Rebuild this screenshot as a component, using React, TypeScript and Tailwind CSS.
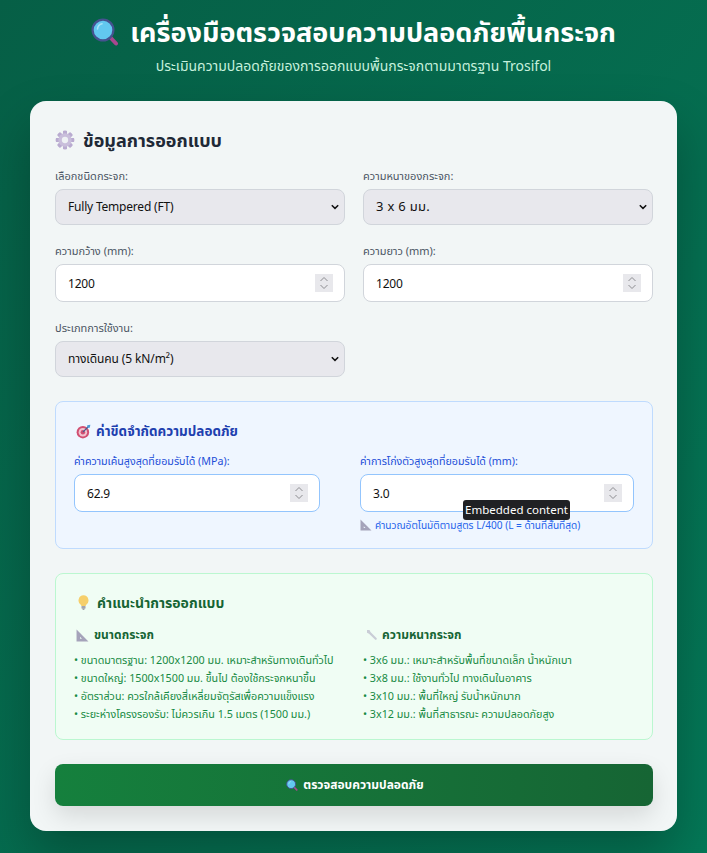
import React from "react";

const FONT = "font-['Noto_Sans','Noto_Sans_Thai','Noto_Sans_Thai_UI','Lato',sans-serif]";

function Magnifier({ className }: { className: string }) {
  return (
    <svg viewBox="0 0 28 28" className={className}>
      <path d="M18 18 L25 25.5" stroke="#a8478f" strokeWidth="4" strokeLinecap="round" />
      <circle cx="12" cy="12" r="10.4" fill="#62c8f0" stroke="#45528f" strokeWidth="2.2" />
      <path d="M6.5 11 A6 6 0 0 1 11 5.8" stroke="#a8e4f8" strokeWidth="1.6" fill="none" strokeLinecap="round" />
    </svg>
  );
}

function Gear({ className }: { className: string }) {
  const teeth = [0, 45, 90, 135, 180, 225, 270, 315];
  return (
    <svg viewBox="0 0 24 24" className={className}>
      {teeth.map((a) => (
        <rect key={a} x="9.6" y="1" width="4.8" height="22" rx="1.2" fill="#b9abd0" transform={`rotate(${a} 12 12)`} />
      ))}
      <circle cx="12" cy="12" r="8" fill="#c9bedb" />
      <circle cx="12" cy="12" r="3.8" fill="#eef1f4" />
    </svg>
  );
}

function Target({ className }: { className: string }) {
  return (
    <svg viewBox="0 0 24 24" className={className}>
      <circle cx="11" cy="13" r="10" fill="#d14f72" />
      <circle cx="11" cy="13" r="6.8" fill="#f0c3cf" />
      <circle cx="11" cy="13" r="3.6" fill="#d14f72" />
      <path d="M11 13 L20 4" stroke="#3f5f8f" strokeWidth="1.8" />
      <path d="M18 2 L23 1 L22 6 L19 6 L18 5 Z" fill="#4a9ad8" />
    </svg>
  );
}

function Ruler({ className }: { className: string }) {
  return (
    <svg viewBox="0 0 24 24" className={className}>
      <path fillRule="evenodd" d="M1 1 L23 23 L1 23 Z M7.5 14.5 L7.5 18 L11 18 Z" fill="#a5a3ba" />
    </svg>
  );
}

function Bulb({ className }: { className: string }) {
  return (
    <svg viewBox="0 0 16 22" className={className}>
      <path d="M8 0.5 A7.5 7.5 0 0 0 4 14.2 L5 16 L11 16 L12 14.2 A7.5 7.5 0 0 0 8 0.5 Z" fill="#f6cf6b" />
      <rect x="5" y="16" width="6" height="4" rx="1" fill="#a3a5b0" />
      <rect x="6.5" y="20" width="3" height="1.5" rx=".7" fill="#85878f" />
    </svg>
  );
}

function Wrench({ className }: { className: string }) {
  return (
    <svg viewBox="0 0 24 24" className={className}>
      <path d="M2 2 L7 2 L9 6 L21 18 A2 2 0 0 1 18 21 L6 9.5 L2 7.5 Z" fill="#c9cdd6" />
    </svg>
  );
}

function Chevron() {
  return (
    <svg viewBox="0 0 8 6" className="pointer-events-none absolute right-[6px] top-1/2 h-[6px] w-[8px] -translate-y-1/2">
      <path d="M0.8 1.2 L4 4.4 L7.2 1.2" fill="none" stroke="#111" strokeWidth="1.5" />
    </svg>
  );
}

function Spinner() {
  return (
    <div className="pointer-events-none absolute right-[12px] top-1/2 flex h-[18px] w-[18px] -translate-y-1/2 items-center justify-center bg-[#e8e8ec]">
      <svg viewBox="0 0 18 18" className="h-[18px] w-[18px]">
        <path d="M5.5 7 L9 3.5 L12.5 7 M5.5 11 L9 14.5 L12.5 11" fill="none" stroke="#8c8c90" strokeWidth="1" />
      </svg>
    </div>
  );
}

function SelectField({ label, value, options, textClass }: { label: string; value: string; options: string[]; textClass: string }) {
  return (
    <div className="flex flex-col">
      <label className="mb-[4px] h-[19px] text-[11px] leading-[19px] text-[#4b5563]">{label}</label>
      <div className="relative h-[36px]">
        <select
          defaultValue={value}
          className={`h-full w-full appearance-none rounded-[8px] border border-[#d1d5db] bg-[#e8e8ed] px-3 text-[#111] outline-none ${textClass}`}
        >
          {options.map((o) => (
            <option key={o}>{o}</option>
          ))}
        </select>
        <Chevron />
      </div>
    </div>
  );
}

function NumberField({ label, value }: { label: string; value: string }) {
  return (
    <div className="flex flex-col">
      <label className="mb-[4px] h-[19px] text-[11px] leading-[19px] text-[#4b5563]">{label}</label>
      <div className="relative h-[38px]">
        <input
          readOnly
          value={value}
          className="h-full w-full rounded-[8px] border border-[#d1d5db] bg-white px-3 text-[12px] tracking-[-0.2px] text-[#111] outline-none"
        />
        <Spinner />
      </div>
    </div>
  );
}

function LimitField({ label, value, note }: { label: string; value: string; note?: boolean }) {
  return (
    <div className="flex flex-col">
      <label className="mb-[3px] h-[19px] whitespace-nowrap text-[10.7px] leading-[19px] text-[#1d4ed8]">{label}</label>
      <div className="relative h-[38px]">
        <input
          readOnly
          value={value}
          className="h-full w-full rounded-[8px] border border-[#93c5fd] bg-white px-3 text-[12px] tracking-[-0.2px] text-[#111] outline-none"
        />
        <Spinner />
        {note && (
          <div className="absolute left-[103px] top-[26px] z-10 flex h-[20px] w-[107px] items-center justify-center whitespace-nowrap rounded-[3px] bg-[#202124] text-[11.5px] text-white">
            Embedded content
          </div>
        )}
      </div>
      {note && (
        <div className="mt-[5px] flex items-center gap-[3px] text-[10.1px] leading-[16px] text-[#2563eb]">
          <Ruler className="h-[12px] w-[12px]" />
          <span>คำนวณอัตโนมัติตามสูตร L/400 (L = ด้านที่สั้นที่สุด)</span>
        </div>
      )}
    </div>
  );
}

function TipColumn({ icon, title, items }: { icon: React.ReactNode; title: string; items: string[] }) {
  return (
    <div className="flex flex-col">
      <div className="mb-[6px] flex h-[20px] items-center text-[12px] font-bold text-[#166534]">
        {icon}
        <span>{title}</span>
      </div>
      <ul className="flex flex-col text-[10.75px] leading-[18px] text-[#178a43]">
        {items.map((t) => (
          <li key={t} className="whitespace-nowrap">• {t}</li>
        ))}
      </ul>
    </div>
  );
}

export default function App() {
  return (
    <div className={`${FONT} h-[853px] w-[707px] overflow-hidden bg-gradient-to-br from-[#065f46] to-[#047857]`}>
      <header className="flex h-[101px] flex-col items-center pt-[12px] text-white">
        <h1 className="flex h-[40px] items-center gap-[11px] text-[27px] font-bold leading-[40px]">
          <Magnifier className="h-[28px] w-[28px]" />
          <span>เครื่องมือตรวจสอบความปลอดภัยพื้นกระจก</span>
        </h1>
        <p className="mt-[4px] text-[14px] leading-[20px] text-[#c6f1dd]">
          ประเมินความปลอดภัยของการออกแบบพื้นกระจกตามมาตรฐาน Trosifol
        </p>
      </header>

      <main className="mx-[30px] h-[730px] rounded-[16px] bg-[#f2f6f6] pl-[25px] pr-[24px] pt-[26px] shadow-[0_25px_50px_rgba(0,0,0,0.25)]">
        <h2 className="mb-[13px] flex h-[26px] items-center gap-[8px] text-[18px] font-bold text-[#1f2937]">
          <Gear className="h-[20px] w-[20px]" />
          <span>ข้อมูลการออกแบบ</span>
        </h2>

        <div className="grid grid-cols-2 gap-x-[18px] gap-y-[16px]">
          <SelectField
            label="เลือกชนิดกระจก:"
            value="Fully Tempered (FT)"
            options={["Fully Tempered (FT)", "Heat Strengthened (HS)", "Annealed (AN)"]}
            textClass="text-[12px] tracking-[-0.2px]"
          />
          <SelectField
            label="ความหนาของกระจก:"
            value="3 x 6 มม."
            options={["3 x 6 มม.", "3 x 8 มม.", "3 x 10 มม.", "3 x 12 มม."]}
            textClass="text-[13px] tracking-[0.3px]"
          />
          <NumberField label="ความกว้าง (mm):" value="1200" />
          <NumberField label="ความยาว (mm):" value="1200" />
          <SelectField
            label="ประเภทการใช้งาน:"
            value="ทางเดินคน (5 kN/m²)"
            options={["ทางเดินคน (5 kN/m²)", "พื้นที่สาธารณะ"]}
            textClass="text-[12px] tracking-[-0.1px]"
          />
        </div>

        <section className="mt-[24px] h-[148px] rounded-[8px] border border-[#bfdbfe] bg-[#eff6ff] px-[18px] pt-[18px]">
          <h3 className="mb-[10px] ml-[2px] flex h-[22px] items-center gap-[5px] text-[13.5px] font-bold text-[#1e40af]">
            <Target className="h-[15px] w-[15px]" />
            <span>ค่าขีดจำกัดความปลอดภัย</span>
          </h3>
          <div className="grid grid-cols-[246px_274px] gap-x-[40px]">
            <LimitField label="ค่าความเค้นสูงสุดที่ยอมรับได้ (MPa):" value="62.9" />
            <LimitField label="ค่าการโก่งตัวสูงสุดที่ยอมรับได้ (mm):" value="3.0" note />
          </div>
        </section>

        <section className="mt-[24px] h-[167px] rounded-[8px] border border-[#bbf7d0] bg-[#f0fdf4] px-[18px] pt-[17px]">
          <h3 className="mb-[12px] ml-[4px] flex h-[22px] items-center gap-[8px] text-[14px] font-bold text-[#166534]">
            <Bulb className="h-[15px] w-[11px]" />
            <span>คำแนะนำการออกแบบ</span>
          </h3>
          <div className="grid grid-cols-[289px_1fr]">
            <TipColumn
              icon={<Ruler className="ml-[2px] mr-[5px] h-[13px] w-[13px]" />}
              title="ขนาดกระจก"
              items={[
                "ขนาดมาตรฐาน: 1200x1200 มม. เหมาะสำหรับทางเดินทั่วไป",
                "ขนาดใหญ่: 1500x1500 มม. ขึ้นไป ต้องใช้กระจกหนาขึ้น",
                "อัตราส่วน: ควรใกล้เคียงสี่เหลี่ยมจัตุรัสเพื่อความแข็งแรง",
                "ระยะห่างโครงรองรับ: ไม่ควรเกิน 1.5 เมตร (1500 มม.)",
              ]}
            />
            <TipColumn
              icon={<Wrench className="ml-[3px] mr-[4px] h-[12px] w-[12px]" />}
              title="ความหนากระจก"
              items={[
                "3x6 มม.: เหมาะสำหรับพื้นที่ขนาดเล็ก น้ำหนักเบา",
                "3x8 มม.: ใช้งานทั่วไป ทางเดินในอาคาร",
                "3x10 มม.: พื้นที่ใหญ่ รับน้ำหนักมาก",
                "3x12 มม.: พื้นที่สาธารณะ ความปลอดภัยสูง",
              ]}
            />
          </div>
        </section>

        <button className="mt-[24px] flex h-[42px] w-full items-center justify-center gap-[5px] rounded-[8px] bg-gradient-to-r from-[#15803d] to-[#166534] pl-[2px] text-[12px] font-bold text-white shadow-[0_10px_25px_rgba(0,0,0,0.12)]">
          <Magnifier className="h-[12px] w-[12px]" />
          <span>ตรวจสอบความปลอดภัย</span>
        </button>
      </main>
    </div>
  );
}
